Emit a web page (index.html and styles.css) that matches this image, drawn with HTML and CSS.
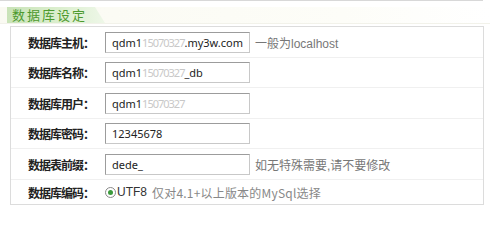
FILE: index.html
```html
<!DOCTYPE html>
<html>
<head>
<meta charset="utf-8">
<link rel="stylesheet" href="styles.css">
</head>
<body>
<div class="topline"></div>
<div class="head"><div class="tab">数据库设定</div></div>
<div class="box">
  <div class="row">
    <div class="label">数据库主机：</div>
    <div class="field">qdm1<span class="blur">15070327</span>.my3w.com</div>
    <div class="hint">一般为localhost</div>
  </div>
  <div class="row">
    <div class="label">数据库名称：</div>
    <div class="field">qdm1<span class="blur">15070327</span>_db</div>
  </div>
  <div class="row">
    <div class="label">数据库用户：</div>
    <div class="field">qdm1<span class="blur">15070327</span></div>
  </div>
  <div class="row">
    <div class="label">数据库密码：</div>
    <div class="field">12345678</div>
  </div>
  <div class="row">
    <div class="label">数据表前缀：</div>
    <div class="field">dede_</div>
    <div class="hint">如无特殊需要,请不要修改</div>
  </div>
  <div class="row last">
    <div class="label">数据库编码：</div>
    <div class="radio"><span class="dot"></span></div>
    <div class="utf">UTF8</div>
    <div class="note">仅对4.1+以上版本的MySql选择</div>
  </div>
</div>
</body>
</html>
```
FILE: styles.css
```css
body {
  margin: 0;
  background: #fff;
  font-family: "Noto Sans CJK SC", sans-serif;
  font-size: 12px;
  color: #333;
}
.topline {
  width: 483px;
  height: 1px;
  background: #d8d8d8;
}
.head {
  margin-top: 6px;
  height: 16px;
  width: 490px;
  background: linear-gradient(to right, #fafaf2 0%, #fdfdf8 70%, #ffffff 100%);
  border-bottom: 1px solid #f2f2ea;
}
.tab {
  margin-left: 7px;
  width: 98px;
  height: 16px;
  padding-left: 5px;
  box-sizing: border-box;
  background: linear-gradient(to right, #c9e3b8 0%, #dcefcf 55%, #eef7e8 100%);
  clip-path: polygon(0 0, 88px 0, 98px 16px, 0 16px);
  color: #4d9a2e;
  font-size: 13px;
  line-height: 16px;
  letter-spacing: 2px;
}
.box {
  margin: 2px 0 0 10px;
  width: 474px;
  box-sizing: border-box;
  border: 1px solid #dcdcdc;
}
.row {
  display: flex;
  align-items: center;
  height: 31px;
  box-sizing: border-box;
  border-bottom: 1px solid #f0f0f0;
}
.row:nth-child(even) {
  height: 30px;
}
.row.last {
  height: 24px;
  border-bottom: none;
}
.label {
  width: 83px;
  text-align: right;
  font-weight: bold;
  font-size: 12px;
  letter-spacing: -1px;
  color: #222;
  flex: none;
}
.field {
  margin-left: 11px;
  width: 145px;
  height: 21px;
  box-sizing: border-box;
  border: 1px solid #9c9c9c;
  border-right-color: #c8c8c8;
  border-bottom-color: #c8c8c8;
  padding-left: 6px;
  font-family: "Noto Sans", sans-serif;
  font-size: 11px;
  line-height: 19px;
  color: #222;
  flex: none;
}
.blur {
  color: #c8c8c8;
  letter-spacing: -1px;
}
.hint {
  margin-left: 5px;
  color: #777;
  font-family: "Liberation Sans", "Noto Sans CJK SC", sans-serif;
  font-size: 12px;
}
.radio {
  margin-left: 11px;
  width: 11px;
  height: 11px;
  box-sizing: border-box;
  border: 1px solid #8a8a8a;
  border-radius: 50%;
  display: flex;
  align-items: center;
  justify-content: center;
  background: #fff;
  flex: none;
}
.dot {
  width: 5px;
  height: 5px;
  border-radius: 50%;
  background: #3c9a3c;
}
.utf {
  margin-left: 1px;
  color: #333;
  font-family: "Liberation Sans", sans-serif;
  font-size: 12px;
}
.note {
  margin-left: 5px;
  color: #888;
  font-size: 12px;
  letter-spacing: 0.2px;
}
```
